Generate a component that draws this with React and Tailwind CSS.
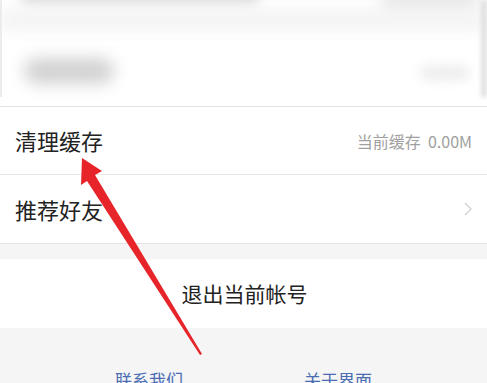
export default function App() {
  const font = { fontFamily: '"Noto Sans CJK SC", "Noto Sans", sans-serif' }
  return (
    <div className="relative w-[487px] h-[383px] overflow-hidden bg-[#f5f5f5]" style={font}>
      {/* blurred header area */}
      <div className="relative h-[106px] bg-white overflow-hidden">
        <div className="absolute left-[20px] top-[-8px] w-[240px] h-[12px] rounded-full bg-[#d8d8d8] blur-[6px]" />
        <div className="absolute left-[380px] top-[-6px] w-[100px] h-[16px] rounded-full bg-[#e2e2e2] blur-[8px]" />
        <div className="absolute left-0 top-[10px] w-[487px] h-[20px] bg-[#f3f3f3] blur-[8px]" />
        <div className="absolute left-[24px] top-[58px] w-[90px] h-[26px] rounded-full bg-[#d2d2d2] blur-[8px]" />
        <div className="absolute left-[420px] top-[66px] w-[50px] h-[14px] rounded-full bg-[#ececec] blur-[6px]" />
        <div className="absolute right-0 top-0 w-[6px] h-[97px] bg-[#e0e0e0] blur-[2px]" />
        <div className="absolute left-0 top-0 w-[2px] h-[97px] bg-[#ececec]" />
      </div>
      <div className="border-t border-[#e3e3e3] bg-white">
        <div className="h-[68px] flex items-center justify-between pl-[15px] pr-[15px] border-b border-[#e8e8e8]">
          <span className="text-[22px] text-[#222]">清理缓存</span>
          <span className="text-[16px] text-[#a0a0a0]">当前缓存&nbsp;&nbsp;0.00M</span>
        </div>
        <div className="h-[69px] flex items-center justify-between pl-[15px] pr-[15px] border-b border-[#e3e3e3]">
          <span className="text-[22px] text-[#222]">推荐好友</span>
          <svg width="8" height="14" viewBox="0 0 8 14" fill="none">
            <path d="M1 1 L7 7 L1 13" stroke="#d0d0d0" strokeWidth="1.3" />
          </svg>
        </div>
      </div>
      <div className="h-[15px]" />
      <div className="h-[69px] bg-white flex items-center justify-center">
        <span className="text-[21px] text-[#222] ml-[2px]">退出当前帐号</span>
      </div>
      <div className="flex pt-[39px]">
        <span className="ml-[115px] text-[17px] text-[#4a6cb3]">联系我们</span>
        <span className="ml-[121px] text-[17px] text-[#4a6cb3]">关于界面</span>
      </div>
      {/* red arrow */}
      <svg className="absolute left-0 top-0" width="487" height="383" viewBox="0 0 487 383">
        <polygon points="82,158 102,171 95,175 202,354 200,355 87,181 81,185" fill="#e8242b" />
      </svg>
    </div>
  )
}
